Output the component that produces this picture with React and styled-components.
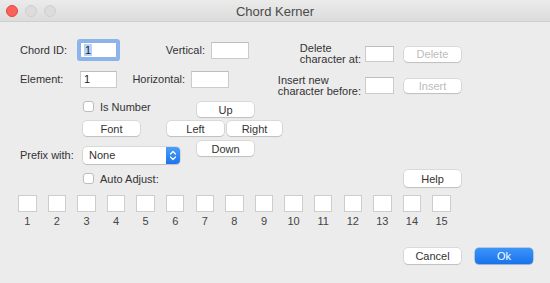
import React from "react"
import styled, { createGlobalStyle } from "styled-components"

const GlobalStyle = createGlobalStyle`
	html, body {
		margin: 0;
		padding: 0;
		background: #ececec;
	}
	body {
		font-family: "Liberation Sans", Arial, sans-serif;
		font-size: 11px;
		color: #333;
	}
`

const Window = styled.div`
	width: 550px;
	height: 283px;
	overflow: hidden;
	background: #ececec;
	display: flex;
	flex-direction: column;
`

const TitleBar = styled.div`
	height: 21px;
	border-bottom: 1px solid #cfcfcf;
	background: linear-gradient(#ebebeb, #dcdcdc);
	display: grid;
	grid-template-columns: 1fr auto 1fr;
	align-items: center;
`

const Lights = styled.div`
	display: flex;
	gap: 7px;
	padding-left: 6px;
`

const Light = styled.span`
	width: 12px;
	height: 12px;
	border-radius: 50%;
	box-sizing: border-box;
	background: ${p => (p.$red ? "#fc605b" : "#dcdcdc")};
	border: 1px solid ${p => (p.$red ? "#e2463f" : "#cfcfcf")};
`

const Title = styled.div`
	font-size: 13px;
	color: #4a4a4a;
	padding-top: 1px;
`

const TopSection = styled.div`
	display: flex;
	align-items: flex-start;
`

const LeftCol = styled.div`
	width: 262px;
	box-sizing: border-box;
	padding-left: 20px;
	margin-top: 17px;
`

const RightCol = styled.div`
	margin-top: 24px;
`

const Row = styled.div`
	display: flex;
	align-items: ${p => p.$align || "center"};
	height: ${p => p.$h}px;
	margin-top: ${p => p.$mt || 0}px;
	padding-left: ${p => p.$pl || 0}px;
`

const Label = styled.div`
	width: ${p => p.$w}px;
	flex: none;
	text-align: ${p => p.$align || "left"};
	line-height: ${p => p.$lh || 13}px;
	margin-right: ${p => p.$mr || 0}px;
	align-self: ${p => p.$self || "auto"};
`

const LabelStack = styled.span`
	display: inline-block;
	text-align: left;
	line-height: 11px;
`

const Field = styled.div`
	width: ${p => p.$w}px;
	height: ${p => p.$h}px;
	flex: none;
	box-sizing: border-box;
	background: #fff;
	border: 1px solid #cbcbcb;
	border-top-color: #bdbdbd;
	padding-left: 3px;
	line-height: ${p => p.$h - 2}px;
	margin-right: ${p => p.$mr || 0}px;
	color: #222;
`

const FocusField = styled(Field)`
	border-color: #8fb2e6;
	box-shadow: 0 0 0 3px #8cb3ea;
	border-radius: 1px;
`

const Selected = styled.span`
	background: #b5d2f7;
	padding: 0 1px;
`

const Button = styled.div`
	width: ${p => p.$w}px;
	height: ${p => p.$h || 15}px;
	flex: none;
	box-sizing: border-box;
	background: #fff;
	border-radius: 4px;
	box-shadow: 0 0 0 0.5px rgba(0, 0, 0, 0.16), 0 1px 1px rgba(0, 0, 0, 0.12);
	display: flex;
	align-items: center;
	justify-content: center;
	color: ${p => (p.$disabled ? "#bcbcbc" : "#333")};
	margin-left: ${p => p.$ml || 0}px;
	margin-top: ${p => p.$mt || 0}px;
`

const PrimaryButton = styled(Button)`
	background: linear-gradient(#3b95f8, #1a72ec);
	box-shadow: 0 0 0 0.5px rgba(20, 90, 200, 0.5), 0 1px 1px rgba(0, 0, 0, 0.12);
	color: #fff;
`

const CheckGroup = styled.div`
	width: ${p => p.$w}px;
	flex: none;
	display: flex;
	align-items: center;
	gap: 6px;
	height: 11px;
`

const Check = styled.span`
	width: 11px;
	height: 11px;
	box-sizing: border-box;
	background: #fff;
	border: 1px solid #bdbdbd;
	border-radius: 3px;
	flex: none;
`

const Select = styled.div`
	width: 97px;
	height: 17px;
	flex: none;
	align-self: flex-end;
	display: flex;
	background: #fff;
	border-radius: 4px;
	box-shadow: 0 0 0 0.5px rgba(0, 0, 0, 0.16), 0 1px 1px rgba(0, 0, 0, 0.12);
	overflow: hidden;
`

const SelectText = styled.div`
	flex: 1;
	padding-left: 6px;
	line-height: 17px;
	color: #333;
`

const Stepper = styled.div`
	width: 14px;
	background: linear-gradient(#4a9ff9, #1c74ec);
	display: flex;
	align-items: center;
	justify-content: center;
`

const Boxes = styled.div`
	display: grid;
	grid-template-columns: repeat(15, 18.5px);
	column-gap: 11.1px;
	padding-left: 18px;
	margin-top: 8px;
`

const Cell = styled.div`
	display: flex;
	flex-direction: column;
	align-items: center;
`

const Box = styled.div`
	width: 18.5px;
	height: 17px;
	box-sizing: border-box;
	background: #fff;
	border: 1px solid #cdcdcd;
`

const Num = styled.div`
	margin-top: 3px;
	line-height: 13px;
	color: #444;
`

const Footer = styled.div`
	display: flex;
	padding-left: 404px;
	gap: 14px;
	margin-top: 20px;
`

const StepperIcon = () => (
	<svg width="8" height="11" viewBox="0 0 8 11">
		<path d="M1.5 4 L4 1.5 L6.5 4 M1.5 7 L4 9.5 L6.5 7" fill="none" stroke="#fff" strokeWidth="1.2" strokeLinecap="round" strokeLinejoin="round" />
	</svg>
)

const App = () => {
	const nums = Array.from({ length: 15 }, (_, i) => i + 1)

	return (
		<>
			<GlobalStyle />
			<Window>
				<TitleBar>
					<Lights>
						<Light $red />
						<Light />
						<Light />
					</Lights>
					<Title>Chord Kerner</Title>
					<div />
				</TitleBar>

				<TopSection>
					<LeftCol>
						<Row $h={22}>
							<Label $w={60}>Chord ID:</Label>
							<FocusField $w={37} $h={16}>
								<Selected>1</Selected>
							</FocusField>
							<Label $w={88} $align="right" $mr={6}>Vertical:</Label>
							<Field $w={38} $h={17} />
						</Row>
						<Row $h={17} $mt={10}>
							<Label $w={60}>Element:</Label>
							<Field $w={37} $h={17}>1</Field>
							<Label $w={68} $align="right" $mr={6}>Horizontal:</Label>
							<Field $w={38} $h={17} />
						</Row>
					</LeftCol>
					<RightCol>
						<Row $h={16}>
							<Label $w={99} $align="right" $lh={11} $mr={4}>
								<LabelStack>
									Delete
									<br />
									character at:
								</LabelStack>
							</Label>
							<Field $w={29} $h={16} />
							<Button $w={57} $ml={10} $disabled>Delete</Button>
						</Row>
						<Row $h={17} $mt={15}>
							<Label $w={99} $align="right" $lh={11} $mr={4}>
								<LabelStack>
									Insert new
									<br />
									character before:
								</LabelStack>
							</Label>
							<Field $w={29} $h={17} />
							<Button $w={57} $h={14} $ml={10} $disabled>Insert</Button>
						</Row>
					</RightCol>
				</TopSection>

				<Row $h={16} $mt={7} $pl={83} $align="flex-start">
					<CheckGroup $w={114}>
						<Check />
						Is Number
					</CheckGroup>
					<Button $w={57} $mt={1}>Up</Button>
				</Row>
				<Row $h={16} $mt={4} $pl={83} $align="flex-start">
					<Button $w={57}>Font</Button>
					<Button $w={57} $ml={27}>Left</Button>
					<Button $w={55} $ml={3}>Right</Button>
				</Row>
				<Row $h={23} $mt={4} $pl={20} $align="flex-start">
					<Label $w={63} $lh={17} $self="flex-end">Prefix with:</Label>
					<Select>
						<SelectText>None</SelectText>
						<Stepper>
							<StepperIcon />
						</Stepper>
					</Select>
					<Button $w={57} $ml={17}>Down</Button>
				</Row>
				<Row $h={17} $mt={6} $pl={83}>
					<CheckGroup $w={321}>
						<Check />
						Auto Adjust:
					</CheckGroup>
					<Button $w={57} $h={17}>Help</Button>
				</Row>

				<Boxes>
					{nums.map(n => (
						<Cell key={n}>
							<Box />
							<Num>{n}</Num>
						</Cell>
					))}
				</Boxes>

				<Footer>
					<Button $w={57} $h={16}>Cancel</Button>
					<PrimaryButton $w={58} $h={16}>Ok</PrimaryButton>
				</Footer>
			</Window>
		</>
	)
}

export default App
